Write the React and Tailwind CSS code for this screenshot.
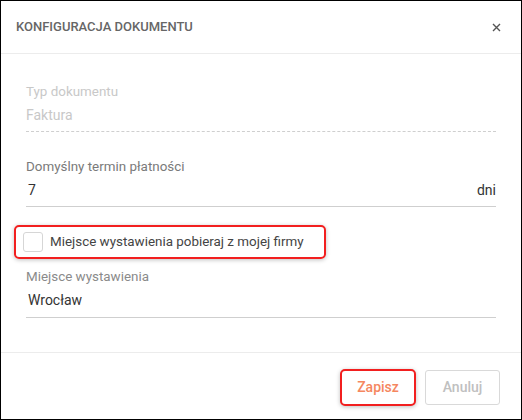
import React from 'react';

export default function App() {
  return (
    <div className="w-[522px] h-[420px] border border-black bg-white flex flex-col font-['Roboto',sans-serif] overflow-hidden">
      {/* Header */}
      <div className="h-[53px] shrink-0 flex items-center justify-between pl-[15px] pr-[20px] border-b border-[#ececec]">
        <h2 className="text-[13px] font-medium text-[#666]">KONFIGURACJA DOKUMENTU</h2>
        <button className="w-[10px] h-[10px] flex items-center justify-center">
          <svg width="9" height="9" viewBox="0 0 9 9" fill="none" stroke="#555" strokeWidth="1.4">
            <path d="M1 1L8 8M8 1L1 8" />
          </svg>
        </button>
      </div>

      {/* Body */}
      <div className="flex-1 px-[25px] pt-[30px]">
        <div>
          <label className="block text-[13.4px] leading-[16px] text-[#c8c8c8]">Typ dokumentu</label>
          <div className="mt-[5px] pb-[6px] text-[14px] leading-[20px] text-[#c8c8c8] border-b border-dashed border-[#cfcfcf]">
            Faktura
          </div>
        </div>

        <div className="mt-[27px]">
          <label className="block text-[13.4px] leading-[16px] text-[#7a7a7a]">Domyślny termin płatności</label>
          <div className="mt-[5px] pb-[6px] flex justify-between text-[14px] leading-[20px] text-[#333] border-b border-[#cfcfcf]">
            <span className="pl-[2px]">7</span>
            <span>dni</span>
          </div>
        </div>

        <div className="mt-[18px] -ml-[12px] w-[312px] h-[34px] border-2 border-[#f21f1f] rounded-[5px] shadow-[0_1px_4px_rgba(0,0,0,0.25)] flex items-center pl-[7px]">
          <span className="w-[20px] h-[20px] rounded-[3px] border border-[#d6d6d6] bg-white shrink-0" />
          <span className="ml-[7px] text-[13.4px] text-[#444]">Miejsce wystawienia pobieraj z mojej firmy</span>
        </div>

        <div className="mt-[10px]">
          <label className="block text-[13.4px] leading-[16px] text-[#8a8a8a]">Miejsce wystawienia</label>
          <div className="mt-[5px] pb-[7px] pl-[2px] text-[14px] leading-[20px] text-[#333] border-b border-[#cfcfcf]">
            Wrocław
          </div>
        </div>
      </div>

      {/* Footer */}
      <div className="h-[67px] shrink-0 border-t border-[#ececec] flex items-start justify-end gap-[9px] pr-[21px] pt-[16px]">
        <button className="w-[76px] h-[37px] border-2 border-[#f21f1f] rounded-[5px] shadow-[0_1px_4px_rgba(0,0,0,0.25)] bg-white text-[14px] font-medium text-[#f5875f]">
          Zapisz
        </button>
        <button className="mt-[1px] w-[75px] h-[35px] border border-[#d9d9d9] rounded-[3px] bg-white text-[14px] font-medium text-[#c0c0c0]">
          Anuluj
        </button>
      </div>
    </div>
  );
}
